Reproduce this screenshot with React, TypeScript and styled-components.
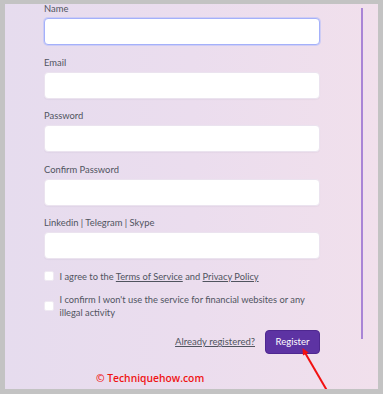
import React from "react";
import styled, { createGlobalStyle } from "styled-components";

const Global = createGlobalStyle`
  html, body { margin: 0; padding: 0; }
  body { font-family: Lato, "Noto Sans", sans-serif; }
`;

const Frame = styled.div`
  width: 383px;
  height: 394px;
  box-sizing: border-box;
  background: #c3c3c3;
  padding: 4px 5px 5px 5px;
`;

const Panel = styled.div`
  position: relative;
  height: 100%;
  overflow: hidden;
  background: linear-gradient(90deg, #e6dcee 0%, #ebddee 50%, #f1e0ec 100%);
  display: flex;
  align-items: flex-start;
`;

const Form = styled.form`
  flex: none;
  width: 276px;
  margin-left: 39px;
  margin-top: -2px;
  display: flex;
  flex-direction: column;
`;

const Field = styled.div`
  display: flex;
  flex-direction: column;
  gap: 3px;
  margin-bottom: 10.5px;
`;

const Label = styled.label`
  font-size: 9.4px;
  line-height: 13px;
  color: #50545f;
`;

const Input = styled.input<{ $focused?: boolean }>`
  box-sizing: border-box;
  height: 27px;
  width: 100%;
  margin: 0;
  border-radius: 4px;
  background: #fff;
  border: 1px solid ${(p) => (p.$focused ? "#a4b0fa" : "#ebe3ef")};
  box-shadow: ${(p) =>
    p.$focused ? "0 0 0 1px rgba(175,188,252,0.5)" : "0 1px 1px rgba(80,60,100,0.04)"};
  outline: none;
`;

const CheckRow = styled.div`
  display: flex;
  align-items: center;
  gap: 6px;
  font-size: 9.3px;
  line-height: 13px;
  color: #50545f;
  margin-bottom: 10.5px;
`;

const Box = styled.span`
  flex: none;
  width: 9.5px;
  height: 9.5px;
  box-sizing: border-box;
  background: #fff;
  border: 1px solid #efe9f2;
  border-radius: 2px;
`;

const Link = styled.a`
  color: #50545f;
  text-decoration: underline;
`;

const Footer = styled.div`
  display: flex;
  justify-content: flex-end;
  align-items: center;
  gap: 10px;
`;

const FooterLink = styled.a`
  font-size: 9.5px;
  color: #50545f;
  text-decoration: underline;
`;

const Button = styled.button`
  box-sizing: border-box;
  height: 24px;
  width: 55px;
  padding: 0;
  border: 1px solid #4e2890;
  border-radius: 4px;
  background: #5d33a3;
  color: #fff;
  font-family: Lato, "Noto Sans", sans-serif;
  font-size: 9.5px;
`;

const Watermark = styled.div`
  margin-top: 17.5px;
  margin-left: 52px;
  font-family: "Open Sans", sans-serif;
  font-weight: 600;
  font-size: 10.3px;
  line-height: 14px;
  color: #f01414;
`;

const Divider = styled.div`
  flex: none;
  width: 1.5px;
  height: 331px;
  margin-top: 4px;
  margin-left: 41px;
  background: #a985d6;
`;

const Arrow = styled.svg`
  position: absolute;
  left: 0;
  top: 0;
  width: 373px;
  height: 385px;
  pointer-events: none;
`;

const fields = [
  { label: "Name", focused: true },
  { label: "Email" },
  { label: "Password" },
  { label: "Confirm Password" },
  { label: "Linkedin | Telegram | Skype" },
];

export default function App() {
  return (
    <>
      <Global />
      <Frame>
        <Panel>
          <Form onSubmit={(e) => e.preventDefault()}>
            {fields.map((f) => (
              <Field key={f.label}>
                <Label>{f.label}</Label>
                <Input $focused={f.focused} />
              </Field>
            ))}
            <CheckRow>
              <Box />
              <span>
                I agree to the <Link>Terms of Service</Link> and <Link>Privacy Policy</Link>
              </span>
            </CheckRow>
            <CheckRow>
              <Box />
              <span>I confirm I won't use the service for financial websites or any illegal activity</span>
            </CheckRow>
            <Footer>
              <FooterLink>Already registered?</FooterLink>
              <Button type="submit">Register</Button>
            </Footer>
            <Watermark>© Techniquehow.com</Watermark>
          </Form>
          <Divider />
          <Arrow viewBox="0 0 373 385">
            <line x1="299" y1="347" x2="324" y2="390" stroke="#f21111" strokeWidth="2" />
            <polygon points="297.5,344 303.5,348.5 298,351.5" fill="#f21111" />
          </Arrow>
        </Panel>
      </Frame>
    </>
  );
}
